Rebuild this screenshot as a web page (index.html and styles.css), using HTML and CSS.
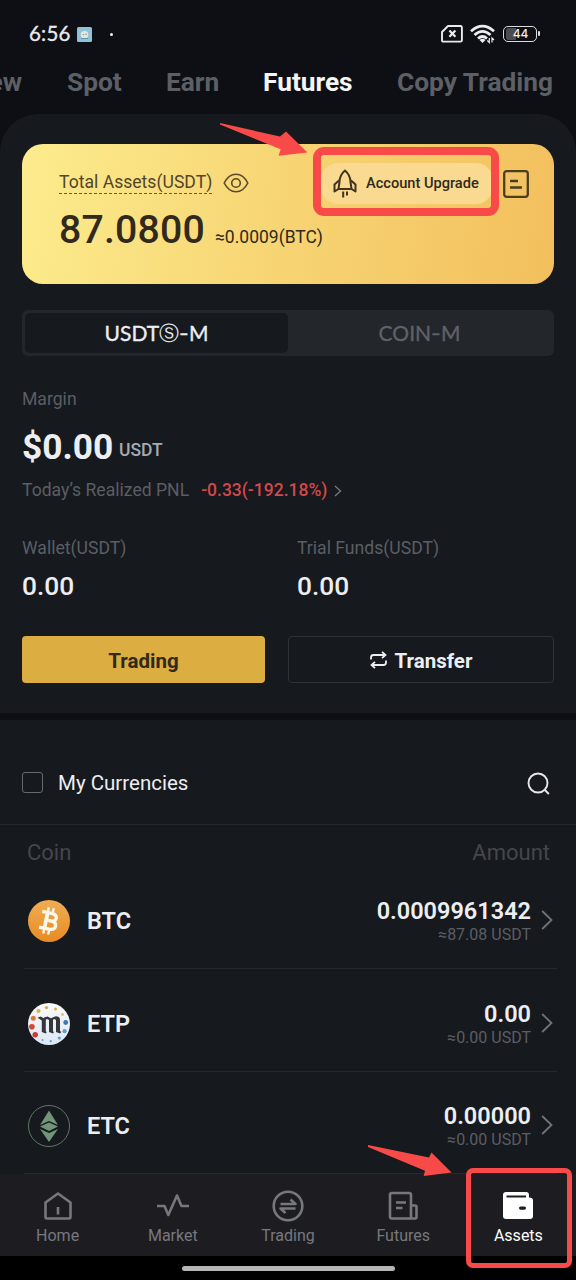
FILE: index.html
```html
<!DOCTYPE html>
<html lang="en">
<head>
<meta charset="utf-8">
<title>Futures Assets</title>
<link rel="stylesheet" href="styles.css">
</head>
<body>
<div class="screen">
  <header class="status">
    <span class="time">6:56</span>
    <svg class="app-dot" width="15" height="15" viewBox="0 0 15 15"><rect width="15" height="15" rx="1.5" fill="#8fc3d3"/><circle cx="7.5" cy="7.8" r="3.8" fill="#e8e6dc"/><path d="M4 11h7v1H4z" fill="#5f97ac"/><circle cx="6.2" cy="7.6" r=".6" fill="#667"/><circle cx="9" cy="7.2" r=".6" fill="#667"/></svg>
    <span class="more-dot"></span>
    <div class="status-icons">
      <svg width="22" height="18" viewBox="0 0 22 18" fill="none" stroke="#e9eaec" stroke-width="1.9"><path d="M7 1h12.5q1.400 0 1.400 1.400v12.800q0 1.400-1.400 1.400H2.400Q1 16.600 1 15.200V7z" stroke-linejoin="round"/><path d="M8.400 5.600l6 6.200M14.400 5.600l-6 6.200" stroke-width="2.200"/></svg>
      <svg width="26" height="20" viewBox="0 0 26 20" fill="none" stroke="#eceded" stroke-width="2.700"><path d="M1 7.200Q12.500-3 24 7.200"/><path d="M4.500 11Q12.500 3.600 20.500 11"/><path d="M8 14.500q4.500-4 9 0"/><path d="M12.500 19l-3-3q3-2.500 6 0z" fill="#eceded" stroke="none"/><path d="M19.300 14v4.500l-2-2M22 18.500v-4.500l2 2" stroke-width="1.200"/></svg>
      <div class="battery"><span>44</span></div>
    </div>
  </header>

  <nav class="tabs">
    <span class="tab tab-cut">ew</span>
    <span class="tab tab-spot">Spot</span>
    <span class="tab tab-earn">Earn</span>
    <span class="tab tab-active">Futures</span>
    <span class="tab tab-copy">Copy Trading</span>
  </nav>

  <main class="panel">
    <section class="card">
      <div class="card-top">
        <span class="card-label">Total Assets(USDT)</span>
        <svg class="eye" width="26" height="20" viewBox="0 0 26 20" fill="none" stroke="#59482a" stroke-width="1.600"><path d="M1.200 10C4 4.500 8 1.200 13 1.200S22 4.500 24.800 10C22 15.500 18 18.800 13 18.800S4 15.500 1.200 10z"/><circle cx="13" cy="10" r="4.300"/></svg>
        <div class="upgrade">
          <svg width="24" height="29" viewBox="0 0 24 29" fill="none" stroke="#40341f" stroke-width="2" stroke-linejoin="round"><path d="M12 1.500C8 5 6.500 9 6.500 13L5.500 20H18.500L17.500 13C17.500 9 16 5 12 1.500z"/><path d="M6 11.500L1.500 15.500V22.500L5.500 20M18 11.500L22.500 15.500V22.500L18.500 20"/><path d="M10.200 22.500v6M14 22.500v4"/></svg>
          <span>Account Upgrade</span>
        </div>
        <svg class="bill" width="26" height="28" viewBox="0 0 26 28" fill="none" stroke="#4c3d20" stroke-width="2.300"><rect x="1.200" y="1.200" width="23.600" height="25.600" rx="2.500"/><path d="M7 11h8M7 17.500h12"/></svg>
      </div>
      <div class="card-sum"><span class="total">87.0800</span><span class="btc-value">≈0.0009(BTC)</span></div>
    </section>

    <div class="toggle">
      <div class="toggle-on">USDT<span class="circled">Ⓢ</span><span class="dash">-</span>M</div>
      <div class="toggle-off">COIN<span class="dash">-</span>M</div>
    </div>

    <div class="label margin-label">Margin</div>
    <div class="margin-sum"><span class="dollars">$0.00</span><span class="unit">USDT</span></div>
    <div class="pnl">
      <span class="label">Today’s Realized PNL</span><span class="loss">-0.33(-192.18%)</span>
      <svg width="8" height="12" viewBox="0 0 8 12" fill="none" stroke="#73767b" stroke-width="1.400"><path d="M1 1l5.500 5L1 11"/></svg>
    </div>
    <div class="funds">
      <div><div class="label">Wallet(USDT)</div><div class="fund-value">0.00</div></div>
      <div><div class="label">Trial Funds(USDT)</div><div class="fund-value">0.00</div></div>
    </div>
    <div class="actions">
      <div class="btn btn-gold">Trading</div>
      <div class="btn btn-line">
        <svg width="17" height="18" viewBox="0 0 17 18" fill="none" stroke="#eceef1" stroke-width="1.800"><path d="M1 8.500V6.500Q1 4 3.500 4H15.500M12 .8L15.500 4 12 7.200"/><path d="M16 9.500v2Q16 14 13.500 14H1.500M5 10.800L1.500 14 5 17.200"/></svg>
        <span>Transfer</span>
      </div>
    </div>
  </main>

  <section class="currencies">
    <div class="filter">
      <span class="checkbox"></span>
      <span class="filter-text">My Currencies</span>
      <svg class="search" width="24" height="24" viewBox="0 0 24 24" fill="none" stroke="#e6e7ea" stroke-width="1.900"><circle cx="11" cy="11" r="9.500"/><path d="M17.500 17.500l4.300 4.500"/></svg>
    </div>
    <div class="list-head"><span>Coin</span><span class="head-amount">Amount</span></div>
    <div class="row">
      <svg width="42" height="42" viewBox="0 0 42 42"><defs><linearGradient id="gold" x1="0" y1="0" x2="0" y2="1"><stop stop-color="#f0ad55"/><stop offset="1" stop-color="#e78b23"/></linearGradient></defs><circle cx="21" cy="21" r="21" fill="url(#gold)"/><g transform="rotate(12 21 21)" fill="none" stroke="#fff8e8"><path d="M18 12v18" stroke-width="3.800"/><path d="M12.500 13H22q5.500 0 5.500 3.800T22 20.600H18H22.500q6 0 6 4.200T22.500 29H12.500" stroke-width="3.300"/><path d="M18 7.500V13M23 7.500V13M18 29v5.500M23 29v5.500" stroke-width="2.400"/></g></svg>
      <span class="coin">BTC</span>
      <div class="amounts"><span class="amount">0.0009961342</span><span class="approx">≈87.08 USDT</span></div>
      <svg class="chev" width="12" height="20" viewBox="0 0 12 20"><path d="M1.200 1l9.300 9-9.300 9"/></svg>
    </div>
    <div class="row">
      <svg width="42" height="42" viewBox="0 0 42 42"><defs><linearGradient id="pearl" x1="0" y1="0" x2="0" y2="1"><stop stop-color="#fafafa"/><stop offset="1" stop-color="#dce7f4"/></linearGradient></defs><circle cx="21" cy="21" r="21" fill="url(#pearl)"/><g fill="#d9b14c"><circle cx="18.500" cy="4.600" r="1.700"/><circle cx="27.500" cy="6" r="1.500"/><circle cx="34.500" cy="11.500" r="1.200"/><circle cx="10.500" cy="8" r="2.100"/></g><circle cx="5.300" cy="15.200" r="2.500" fill="#df783c"/><circle cx="3.900" cy="23.700" r="2.800" fill="#d3492f"/><circle cx="7.200" cy="31.800" r="2.700" fill="#c83a34"/><g fill="#5ba0c7"><circle cx="14.500" cy="37" r="1"/><circle cx="22.700" cy="38.200" r="1.100"/><circle cx="31.300" cy="35" r="1.600"/><circle cx="36.600" cy="28.200" r="2.100"/></g><circle cx="37.700" cy="19.500" r="2.400" fill="#3b75bd"/><path d="M9.500 14.800l3-1.300 3.500 1.700v-.7l3.500-1 3.500 1.800 4-1.900q5-.5 5 3.500V28l1.300 1-1.300 1.500-4-1.500V17l-1.800-1-1.200.8V28.500l1 .5-1 1.500-4-1.500V17l-2-1-1.200.8V28.500l1 .5-1 1.500-4-1.500V17.500z" fill="#34363a"/></svg>
      <span class="coin">ETP</span>
      <div class="amounts"><span class="amount">0.00</span><span class="approx">≈0.00 USDT</span></div>
      <svg class="chev" width="12" height="20" viewBox="0 0 12 20"><path d="M1.200 1l9.300 9-9.300 9"/></svg>
    </div>
    <div class="row row-last">
      <svg width="42" height="42" viewBox="0 0 42 42"><circle cx="21" cy="21" r="20.500" fill="none" stroke="#5d7867"/><g fill="#709677"><path d="M21 5.500l9 14.500-9-4-9 4z"/><path d="M12 21.500l9-4 9 4-9 4.500z"/><path d="M12 24l9 4 9-4-9 13z"/></g></svg>
      <span class="coin">ETC</span>
      <div class="amounts"><span class="amount">0.00000</span><span class="approx">≈0.00 USDT</span></div>
      <svg class="chev" width="12" height="20" viewBox="0 0 12 20"><path d="M1.200 1l9.300 9-9.300 9"/></svg>
    </div>
  </section>

  <footer class="navbar">
    <div class="nav-item"><svg width="32" height="32" viewBox="0 0 32 32"><path d="M3.500 12.500L16 3.500l12.500 9V27q0 1.500-1.500 1.500H5Q3.500 28.500 3.500 27zM16 17v7.500"/></svg><span>Home</span></div>
    <div class="nav-item"><svg width="32" height="32" viewBox="0 0 32 32"><path d="M0 16h7.500l3.800 9L20 5.500 24.500 16H32"/></svg><span>Market</span></div>
    <div class="nav-item"><svg width="32" height="32" viewBox="0 0 32 32"><circle cx="16" cy="16" r="14.300"/><path d="M8.500 14h15l-5-4.500M23.500 18.500h-15l5 4.500"/></svg><span>Trading</span></div>
    <div class="nav-item"><svg width="32" height="32" viewBox="0 0 32 32"><path d="M24 28.500H5Q3 28.500 3 26.500V5Q3 3 5 3H22Q24 3 24 5zM24 15.500h4Q29.500 15.500 29.500 17V27q0 1.500-1.500 1.500H24M9 12.500h10M9 18h6.500"/></svg><span>Futures</span></div>
    <div class="nav-item nav-on"><svg width="32" height="32" viewBox="0 0 32 32"><path class="solid" d="M4 2H24Q27 2 27 5V7.500Q31 7.500 31 10.500V26Q31 29 28 29H4Q1 29 1 26V5Q1 2 4 2z"/><path class="cut" d="M4.500 6.500H24"/><rect class="hole" x="17" y="16.500" width="7" height="3.200" rx="1.600"/></svg><span>Assets</span></div>
  </footer>
  <div class="home-area"><span></span></div>

  <div class="mark mark-upgrade"></div>
  <div class="mark mark-assets"></div>
  <svg class="arrow arrow-upgrade" width="90" height="35" viewBox="0 0 90 35"><path d="M0 0l60 13.500 6-5 21.500 21-29 3.200 2.200-6.400L0 1.500z"/></svg>
  <svg class="arrow arrow-assets" width="86" height="34" viewBox="0 0 86 34"><path d="M0 0l61 12.500 2.500-5L83.500 27.500 55.700 31l1.300-5.300L0 2z"/></svg>
</div>
</body>
</html>
```
FILE: styles.css
```css
* { box-sizing: border-box; }
body { margin: 0; background: #0d0f14; }
svg { display: block; flex: none; }
.screen { position: relative; width: 576px; height: 1280px; overflow: hidden; display: flex; flex-direction: column; font-family: Roboto, "Liberation Sans", sans-serif; color: #eceef2; white-space: nowrap; }

.status { height: 60px; display: flex; align-items: center; padding: 8px 36px 0 29px; }
.time { width: 48px; font: 20.5px/24px Lato, sans-serif; letter-spacing: .2px; margin-top: -2px; color: #e9eaec; -webkit-text-stroke: .3px #e9eaec; }
.more-dot { width: 3px; height: 3px; border-radius: 50%; background: #f1f1f1; margin-left: 18px; }
.status-icons { margin-left: auto; display: flex; align-items: center; gap: 7px; }
.battery { position: relative; width: 34px; height: 16px; border: 1.5px solid #dcdde0; border-radius: 5px; font: 500 12px/13px Inter, sans-serif; text-align: center; background: linear-gradient(90deg, #4b4c50 10px, transparent 10px) content-box; padding: 1px 1px 1px 2px; margin-right: 3px; }
.battery span { display: block; line-height: 12px; }
.battery::after { content: ""; position: absolute; right: -4px; top: 4px; width: 2px; height: 5px; border-radius: 1px; background: #dcdde0; }

.tabs { height: 54px; display: flex; font-weight: 700; font-size: 26.3px; line-height: 44px; color: #5c5f65; }
.tab { flex: none; }
.tab-cut { width: 22px; margin-right: 45px; display: flex; justify-content: flex-end; }
.tab-spot { width: 99px; }
.tab-earn { width: 97px; }
.tab-active { width: 134px; color: #f5f6f8; }

.panel { height: 599px; background: #16191e; border-radius: 38px 38px 0 0; padding: 30px 22px 0; }
.card { height: 140px; border-radius: 21px; background: linear-gradient(100deg, #fcec8d 0%, #f7d372 52%, #f3bf5d 100%); padding: 17px 25px 0 37px; color: #30291c; }
.card-top { height: 44px; display: flex; align-items: center; }
.card-label { font-size: 17.6px; line-height: 21px; border-bottom: 1px dashed #6d5a2d; color: #53452a; }
.eye { margin-left: 11px; }
.upgrade { width: 172px; height: 41px; margin-left: auto; border-radius: 17px; background: #f9da90; display: flex; align-items: center; gap: 9px; padding-left: 12px; font-size: 14.6px; font-weight: 500; }
.bill { margin: 1px 0 0 10px; }
.card-sum { display: flex; align-items: baseline; line-height: 48px; padding-top: 1px; }
.total { font-size: 39.2px; font-weight: 500; letter-spacing: .2px; width: 156px; }
.btc-value { font-size: 17.5px; }

.toggle { height: 46px; margin-top: 26px; background: #23262b; border-radius: 6px; padding: 3px; display: flex; font: 21px/40px Lato, sans-serif; text-align: center; -webkit-text-stroke: .35px currentColor; }
.toggle-on { width: 263px; background: #16191e; border-radius: 5px; display: flex; justify-content: center; line-height: 39px; }
.toggle-off { width: 263px; color: #5f6268; display: flex; justify-content: center; line-height: 39px; }
.circled { font-family: "DejaVu Sans", sans-serif; font-size: 20px; line-height: 40px; -webkit-text-stroke: 0; }
.dash { transform: scaleX(1.25); margin: 0 1px; }

.label { font-size: 17.6px; line-height: 24px; color: #5b5e64; }
.margin-label { margin-top: 31px; }
.margin-sum { display: flex; align-items: flex-end; margin-top: 16px; height: 40px; }
.dollars { font-size: 35.3px; line-height: 40px; font-weight: 700; width: 97px; }
.unit { font-size: 17.5px; line-height: 24px; font-weight: 500; color: #a7aab0; padding-bottom: 5px; }
.pnl { display: flex; align-items: center; margin-top: 11px; }
.pnl svg { margin-top: 2px; }
.loss { font-size: 17.5px; line-height: 24px; font-weight: 500; color: #d04a4c; margin: 0 7px 0 12px; }
.funds { display: grid; grid-template-columns: 275px 1fr; margin-top: 34px; }
.fund-value { margin-top: 10px; font-size: 26.3px; line-height: 32px; font-weight: 500; }
.actions { display: flex; gap: 23px; margin-top: 34px; }
.btn { height: 47px; border-radius: 4px; display: flex; align-items: center; justify-content: center; gap: 8px; font-size: 20.5px; font-weight: 700; padding-top: 2px; }
.btn svg { margin-top: -2px; }
.btn-gold { width: 243px; background: #dcae42; color: #32291a; }
.btn-line { width: 266px; border: 1px solid #2e3136; }

.currencies { margin-top: 7px; height: 454px; background: #16191e; }
.filter { height: 105px; border-bottom: 1px solid #26292e; padding: 22px 25px 0 22px; display: flex; align-items: center; }
.checkbox { width: 21px; height: 21px; border: 1.5px solid #65686d; border-radius: 3px; margin-top: -1px; }
.filter-text { margin-left: 15px; font-size: 20.5px; line-height: 28px; }
.search { margin: 1px 0 0 auto; }
.list-head { display: flex; justify-content: space-between; padding: 14px 26px 0 27px; margin-bottom: -1px; font-size: 22px; line-height: 28px; color: #44474c; }
.row { height: 103px; margin: 0 19px 0 24px; padding: 7px 4px 0; border-bottom: 1px solid #26292e; display: flex; align-items: center; }
.row-last { height: 102px; }
.coin { margin-left: 17px; font-size: 23.5px; font-weight: 600; }
.amounts { margin: 1px 0 0 auto; display: flex; flex-direction: column; align-items: flex-end; }
.amount { font-size: 23.5px; line-height: 26px; font-weight: 600; }
.approx { font-size: 16px; line-height: 21px; color: #5b5e64; }
.chev { margin: 0 0 2px 10px; fill: none; stroke: #707379; stroke-width: 1.8; }

.navbar { height: 82px; background: #1d1d21; display: grid; grid-template-columns: repeat(5, 1fr); color: #77787d; }
.nav-item { display: flex; flex-direction: column; align-items: center; padding-top: 16px; font-size: 16px; line-height: 20px; }
.nav-item span { margin-top: 4px; }
.nav-item svg { fill: none; stroke: #77787d; stroke-width: 2.6; stroke-linejoin: round; }
.nav-on { color: #fff; }
.nav-item .solid { fill: #fff; stroke: none; }
.nav-item .cut { stroke: #1d1d21; stroke-width: 2; }
.nav-item .hole { fill: #1d1d21; stroke: none; }
.home-area { height: 24px; background: #000; display: flex; justify-content: center; padding-top: 10px; }
.home-area span { width: 213px; height: 5px; border-radius: 3px; background: #b5b5b5; }

/* callouts drawn over the interface */
.mark { position: absolute; border: 8px solid #f84b49; border-radius: 11px; }
.mark-upgrade { left: 313px; top: 147px; width: 186px; height: 69px; }
.mark-assets { left: 466px; top: 1168px; width: 106px; height: 100px; border-width: 5px; border-radius: 7px; }
.arrow { position: absolute; fill: #f84b49; }
.arrow-upgrade { left: 220px; top: 123px; }
.arrow-assets { left: 368px; top: 1145px; }
```
